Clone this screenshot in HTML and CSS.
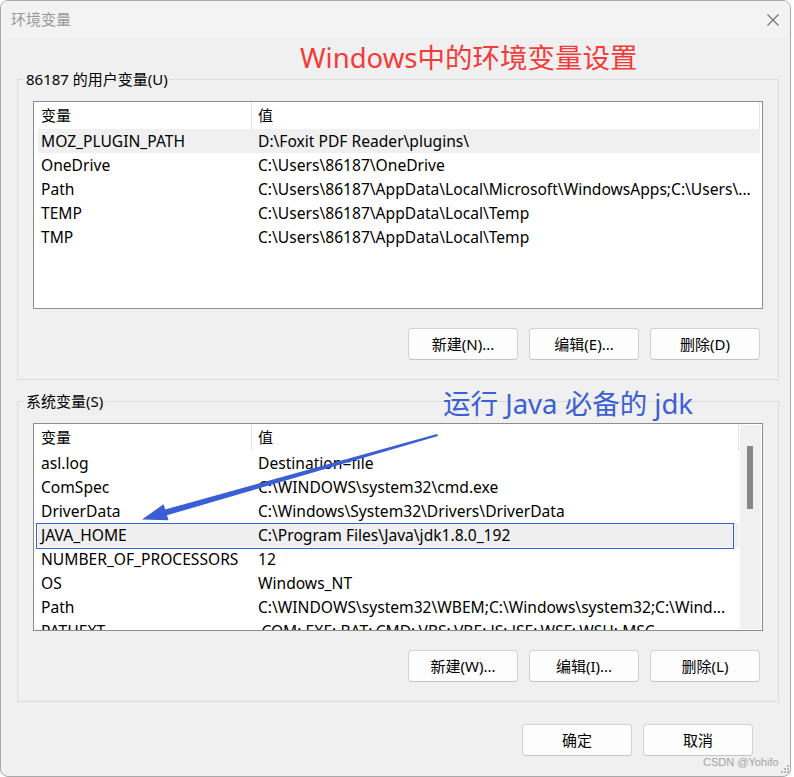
FILE: index.html
```html
<!DOCTYPE html>
<html lang="zh-CN">
<head>
<meta charset="utf-8">
<title>环境变量</title>
<link rel="stylesheet" href="styles.css">
</head>
<body>
<div class="window">
  <div class="titlebar">
    <span class="title">环境变量</span>
    <svg class="close" width="12" height="12" viewBox="0 0 12 12"><path d="M0.5 0.5 L11.5 11.5 M11.5 0.5 L0.5 11.5" stroke="#707070" stroke-width="1.1" fill="none"/></svg>
  </div>
  <div class="content">
    <section class="group">
      <div class="group-label">86187 的用户变量(U)</div>
      <div class="list">
        <div class="list-body user">
          <div class="list-head"><div class="hcell h1">变量</div><div class="hcell h2">值</div></div>
          <div class="row hover"><span class="c1">MOZ_PLUGIN_PATH</span><span class="c2">D:\Foxit PDF Reader\plugins\</span></div>
          <div class="row"><span class="c1">OneDrive</span><span class="c2">C:\Users\86187\OneDrive</span></div>
          <div class="row"><span class="c1">Path</span><span class="c2">C:\Users\86187\AppData\Local\Microsoft\WindowsApps;C:\Users\...</span></div>
          <div class="row"><span class="c1">TEMP</span><span class="c2">C:\Users\86187\AppData\Local\Temp</span></div>
          <div class="row"><span class="c1">TMP</span><span class="c2">C:\Users\86187\AppData\Local\Temp</span></div>
        </div>
      </div>
      <div class="btnrow">
        <button class="btn">新建(N)...</button>
        <button class="btn">编辑(E)...</button>
        <button class="btn">删除(D)</button>
      </div>
    </section>

    <section class="group second">
      <div class="group-label">系统变量(S)</div>
      <div class="list">
        <div class="list-body sys">
          <div class="list-head"><div class="hcell h1">变量</div><div class="hcell h2">值</div></div>
          <div class="row"><span class="c1">asl.log</span><span class="c2">Destination=file</span></div>
          <div class="row"><span class="c1">ComSpec</span><span class="c2">C:\WINDOWS\system32\cmd.exe</span></div>
          <div class="row"><span class="c1">DriverData</span><span class="c2">C:\Windows\System32\Drivers\DriverData</span></div>
          <div class="row selected"><span class="c1">JAVA_HOME</span><span class="c2">C:\Program Files\Java\jdk1.8.0_192</span></div>
          <div class="row"><span class="c1">NUMBER_OF_PROCESSORS</span><span class="c2">12</span></div>
          <div class="row"><span class="c1">OS</span><span class="c2">Windows_NT</span></div>
          <div class="row"><span class="c1">Path</span><span class="c2">C:\WINDOWS\system32\WBEM;C:\Windows\system32;C:\Wind...</span></div>
          <div class="row"><span class="c1">PATHEXT</span><span class="c2">.COM;.EXE;.BAT;.CMD;.VBS;.VBE;.JS;.JSE;.WSF;.WSH;.MSC</span></div>
        </div>
        <div class="scrollbar"><div class="thumb"></div></div>
      </div>
      <div class="btnrow">
        <button class="btn">新建(W)...</button>
        <button class="btn">编辑(I)...</button>
        <button class="btn">删除(L)</button>
      </div>
    </section>

    <div class="footer">
      <button class="btn">确定</button>
      <button class="btn">取消</button>
    </div>
  </div>
</div>

<div class="note note-red">Windows中的环境变量设置</div>
<div class="note note-blue">运行 Java 必备的 jdk</div>
<svg class="arrow" width="794" height="777" viewBox="0 0 794 777">
  <polygon points="437,434 438,436 166.9,515.3 168.6,520.2 142,519.5 163.6,504.2 165.2,509.4" fill="#3a5ed6"/>
</svg>
<div class="watermark">CSDN @Yohifo</div>
<svg class="grip" width="10" height="10" viewBox="0 0 10 10">
  <rect x="7" y="1" width="2" height="2" fill="#b8b8b8"/>
  <rect x="4" y="4" width="2" height="2" fill="#b8b8b8"/>
  <rect x="7" y="4" width="2" height="2" fill="#b8b8b8"/>
  <rect x="1" y="7" width="2" height="2" fill="#b8b8b8"/>
  <rect x="4" y="7" width="2" height="2" fill="#b8b8b8"/>
  <rect x="7" y="7" width="2" height="2" fill="#b8b8b8"/>
</svg>
</body>
</html>
```

FILE: styles.css
```css
* { box-sizing: border-box; }

body {
  margin: 0;
  background: #ffffff;
  position: relative;
  width: 794px;
  height: 777px;
  overflow: hidden;
  font-family: "Noto Sans", "Noto Sans CJK SC", sans-serif;
  font-size: 15px;
  color: #000;
}

.window {
  width: 791px;
  height: 777px;
  border: 1px solid #a9a9a9;
  border-radius: 8px;
  background: #f0f0f0;
  overflow: hidden;
  display: flex;
  flex-direction: column;
}

.titlebar {
  height: 36px;
  background: #f3f3f3;
  display: flex;
  align-items: center;
  justify-content: space-between;
  padding: 0 11px 0 10px;
  flex: none;
}

.title {
  color: #999;
  font-size: 15px;
  line-height: 20px;
}

.close { display: block; margin-top: 2px; }

.content {
  padding: 42px 11px 0 16px;
  display: flex;
  flex-direction: column;
}

.group {
  border: 1px solid #dcdcdc;
  padding: 0 15px 19px 15px;
  display: flex;
  flex-direction: column;
}

.group.second { margin-top: 21px; padding-bottom: 19px; }

.group-label {
  align-self: flex-start;
  margin: -11px 0 0 -9px;
  padding: 0 2px;
  height: 20px;
  line-height: 20px;
  background: #f0f0f0;
  font-size: 15px;
  white-space: nowrap;
}

.list {
  margin-top: 12px;
  height: 208px;
  border: 1px solid #8a8d94;
  background: #fff;
  display: flex;
  overflow: hidden;
}

.list-body {
  flex: 1;
  min-width: 0;
  padding: 0 2px 0 4px;
  overflow: hidden;
}

.list-body.sys { padding-right: 1px; }

.list-head {
  height: 27px;
  display: flex;
}

.hcell {
  line-height: 27px;
  height: 27px;
  white-space: nowrap;
}

.hcell.h1 {
  width: 214px;
  flex: none;
  padding-left: 3px;
  border-right: 1px solid #e3e3e3;
}

.hcell.h2 {
  flex: 1;
  padding-left: 6px;
  border-right: 1px solid #e3e3e3;
}

.row {
  height: 24px;
  line-height: 25px;
  display: flex;
  white-space: nowrap;
  position: relative;
  font-size: 15.6px;
}

.row .c1 {
  width: 220px;
  flex: none;
  padding-left: 3px;
  overflow: hidden;
}

.row .c2 {
  flex: 1;
  min-width: 0;
  overflow: hidden;
}

.row.hover { background: #f0f0f0; }

.row.selected { background: #efefef; }

.row.selected::before {
  content: "";
  position: absolute;
  left: -2px;
  right: 5px;
  top: 0;
  bottom: -2px;
  border: 1px solid #3c5fd4;
}

.scrollbar {
  width: 21px;
  flex: none;
  margin: 1px 1px 1px 0;
  background: #f0f0f0;
  padding: 21px 0 0 7px;
}

.thumb {
  width: 6px;
  height: 63px;
  background: #878787;
}

.btnrow {
  display: flex;
  justify-content: flex-end;
  gap: 11px;
  margin-top: 19px;
  padding-right: 3px;
}

.btn {
  width: 110px;
  height: 32px;
  border: 1px solid #d2d2d2;
  border-bottom-color: #c4c4c4;
  border-radius: 4px;
  background: #fdfdfd;
  font-family: "Noto Sans", "Noto Sans CJK SC", sans-serif;
  font-size: 15px;
  color: #000;
  padding: 0;
  line-height: 30px;
}

.footer {
  display: flex;
  justify-content: flex-end;
  gap: 11px;
  margin-top: 22px;
  padding-right: 26px;
}

.note {
  position: absolute;
  white-space: nowrap;
  line-height: 1;
  font-family: "Noto Sans", "Noto Sans CJK SC", sans-serif;
}

.note-red {
  left: 300px;
  top: 44px;
  font-size: 27.5px;
  color: #f43a3a;
}

.note-blue {
  left: 443px;
  top: 390px;
  font-size: 27.5px;
  color: #3b5fd4;
}

.arrow {
  position: absolute;
  left: 0;
  top: 0;
  pointer-events: none;
}

.watermark {
  position: absolute;
  left: 703px;
  top: 755px;
  font-family: "Liberation Sans", Arial, sans-serif;
  font-size: 11px;
  line-height: 14px;
  color: #a4a4a4;
  white-space: nowrap;
}

.grip {
  position: absolute;
  left: 780px;
  top: 764px;
}
```
